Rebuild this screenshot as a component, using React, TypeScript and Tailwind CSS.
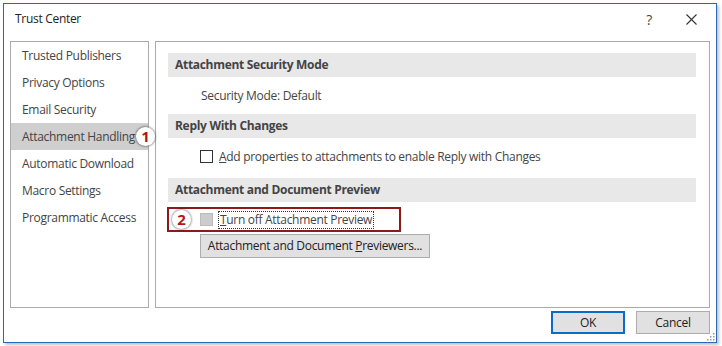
import React from "react";

const font = { fontFamily: '"Open Sans", "Noto Sans", sans-serif' };

function Badge({ n }: { n: string }) {
  return (
    <div className="w-[19px] h-[19px] rounded-full bg-white shadow-[0_0_2px_1px_rgba(0,0,0,0.35)] flex items-center justify-center text-[#b01818] font-bold text-[15px] leading-none">
      {n}
    </div>
  );
}

function SectionBar({ children }: { children: React.ReactNode }) {
  return (
    <div className="h-[24px] bg-[#e8e8e8] flex items-center pl-[7px] font-bold text-[12px] text-[#444] tracking-[-0.3px]">
      {children}
    </div>
  );
}

export default function App() {
  const items = [
    "Trusted Publishers",
    "Privacy Options",
    "Email Security",
    "Attachment Handling",
    "Automatic Download",
    "Macro Settings",
    "Programmatic Access",
  ];
  return (
    <div className="w-[722px] h-[346px] bg-white pt-[3px] pl-[3px]" style={font}>
      <div className="w-[714px] h-[340px] border border-[#2a68b3] bg-white shadow-[2px_2px_3px_rgba(0,0,0,0.25)] flex flex-col text-[12px] text-[#333] tracking-[-0.3px]">
        {/* title bar */}
        <div className="h-[37px] flex items-center pl-[11px] pr-[19px]">
          <div className="text-[12px] text-[#222] flex-1 pb-[7px]">Trust Center</div>
          <div className="text-[14px] text-[#444] mr-[34px] pb-[7px]">?</div>
          <svg width="11" height="11" viewBox="0 0 11 11" className="mb-[6px]">
            <path d="M0.5 0.5 L10.5 10.5 M10.5 0.5 L0.5 10.5" stroke="#333" strokeWidth="1.1" />
          </svg>
        </div>
        {/* content */}
        <div className="flex pl-[6px] gap-[6px]">
          <div className="w-[139px] h-[267px] border border-[#ababab] pt-[0px]">
            {items.map((t, i) => (
              <div
                key={t}
                className={
                  "h-[27px] flex items-center pl-[11px] text-[#444] relative " +
                  (i === 3 ? "bg-[#cfcfcf]" : "")
                }
              >
                {t}
                {i === 3 && (
                  <div className="absolute left-[125px] top-[4px]">
                    <Badge n="1" />
                  </div>
                )}
              </div>
            ))}
          </div>
          <div className="w-[555px] h-[267px] border border-[#ababab] pl-[12px] pr-[13px] pt-[11px]">
            <SectionBar>Attachment Security Mode</SectionBar>
            <div className="h-[37px] flex items-center pl-[33px] text-[#444]">Security Mode: Default</div>
            <SectionBar>Reply With Changes</SectionBar>
            <div className="h-[37px] flex items-center pl-[32px] text-[#444] mb-[3px]">
              <div className="w-[13px] h-[13px] border border-[#333] bg-white mr-[6px]" />
              <span>
                <span className="underline">A</span>dd properties to attachments to enable Reply with Changes
              </span>
            </div>
            <SectionBar>Attachment and Document Preview</SectionBar>
            <div className="mt-[5px] w-[234px] h-[25px] border-2 border-[#8e1b1b] flex items-center pl-[3px] -ml-[1px]">
              <Badge n="2" />
              <div className="w-[13px] h-[13px] border border-[#bcbcbc] bg-[#cccccc] ml-[9px] mr-[5px]" />
              <span className="border border-dotted border-[#333] px-[1px] leading-[16px] text-[#444]">
                <span className="underline">T</span>urn off Attachment Preview
              </span>
            </div>
            <div className="mt-[2px] ml-[32px] w-[230px] h-[24px] bg-[#e1e1e1] border border-[#adadad] flex items-center justify-center text-[#222]">
              <span>
                Attachment and Document <span className="underline">P</span>reviewers...
              </span>
            </div>
          </div>
        </div>
        {/* footer */}
        <div className="flex justify-end gap-[11px] pr-[6px] mt-[3px] relative flex-1">
          <div className="w-[74px] h-[23px] border-2 border-[#0b6cc7] bg-[#e1e1e1] flex items-center justify-center text-[#222]">
            OK
          </div>
          <div className="w-[74px] h-[23px] border border-[#adadad] bg-[#e1e1e1] flex items-center justify-center text-[#222]">
            Cancel
          </div>
          <svg width="8" height="8" viewBox="0 0 8 8" className="absolute right-[1px] bottom-[1px]">
            <rect x="6" y="0" width="1.5" height="1.5" fill="#999" />
            <rect x="3" y="3" width="1.5" height="1.5" fill="#999" />
            <rect x="6" y="3" width="1.5" height="1.5" fill="#999" />
            <rect x="0" y="6" width="1.5" height="1.5" fill="#999" />
            <rect x="3" y="6" width="1.5" height="1.5" fill="#999" />
            <rect x="6" y="6" width="1.5" height="1.5" fill="#999" />
          </svg>
        </div>
      </div>
    </div>
  );
}
